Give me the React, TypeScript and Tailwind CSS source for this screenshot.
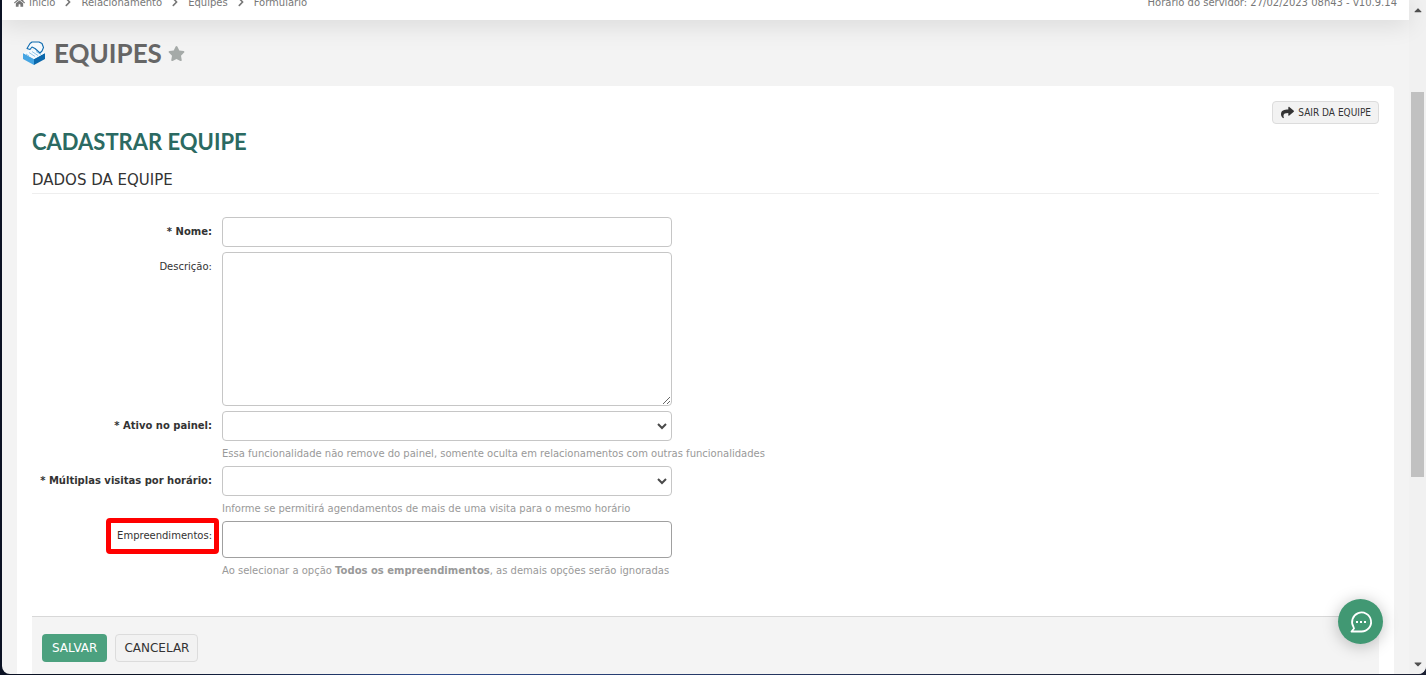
import React from 'react';
import { FaHome, FaChevronRight, FaStar, FaShare, FaCaretUp, FaCaretDown } from 'react-icons/fa';

interface FieldProps {
  id: string;
  label: string;
  required?: boolean;
  highlighted?: boolean;
  hint?: React.ReactNode;
  children: React.ReactNode;
}

const fieldClass = 'block w-full max-w-[450px] rounded border bg-white px-2 outline-none';

const Field: React.FC<FieldProps> = ({ id, label, required = false, highlighted = false, hint, children }) => {
  return (
    <div className="grid grid-cols-[180px_1fr] gap-[10px]">
      <div className="pt-[5px] text-right leading-5">
        <label htmlFor={id} className={`relative inline-block whitespace-nowrap ${required ? 'font-bold' : ''}`}>
          {highlighted && (
            <span className="absolute -top-2 -right-[7px] -bottom-2 -left-[11px] rounded-sm border-5 border-[#ff0000]"></span>
          )}
          {required && <span>* </span>}
          {label}
        </label>
      </div>
      <div>
        {children}
        {hint && <p className="h-[25px] leading-[25px] text-[#999999]">{hint}</p>}
      </div>
    </div>
  );
};

const SelectField: React.FC<{ id: string }> = ({ id }) => (
  <div className="relative max-w-[450px]">
    <select id={id} className={`${fieldClass} h-[30px] appearance-none border-[#c6c6c6]`}></select>
    <svg className="pointer-events-none absolute top-3 right-[5px] h-2 w-[10px]" viewBox="0 0 10 8" fill="none" stroke="#4a4a4a" strokeWidth="2">
      <path d="M1 1 5 5 9 1" />
    </svg>
  </div>
);

const breadcrumb = ['Início', 'Relacionamento', 'Equipes', 'Formulário'];

const Breadcrumb = () => (
  <nav className="flex items-center">
    {breadcrumb.map((item, index) => (
      <React.Fragment key={item}>
        {index > 0 && <FaChevronRight className="mx-2 h-[10px] w-[10px]" />}
        <a href="#" className="flex items-center gap-1">
          {index === 0 && <FaHome className="h-[11px] w-[11px]" />}
          {item}
        </a>
      </React.Fragment>
    ))}
  </nav>
);

const TeamIcon = () => (
  <svg className="h-6 w-6" viewBox="0 0 24 24">
    <path d="M1 12 12 18v6L1 18z" fill="#45a5e3" />
    <path d="M12 18 23 12v6l-11 6z" fill="#0b68ac" />
    <path d="M1 12 6 9.500 18 8l5 4-11 6z" fill="#f4fafe" />
    <path d="M4 13l3 2M7 11.500l6 4M10 10.500l6 4M14 10.500l5 3" stroke="#79b8e2" strokeWidth="0.800" fill="none" />
    <path d="M5 7.500 8 2.500 10 1h7l3 1.500 1.500 4L20 10l-2 2-5-4.500L10 6 8 8.500z" fill="#f6fafd" stroke="#0f6cb0" strokeWidth="1.100" strokeLinejoin="round" />
  </svg>
);

const Scrollbar = () => (
  <div className="flex w-[17px] shrink-0 flex-col items-center bg-[#f1f1f1] text-[#505050]">
    <FaCaretUp className="mt-1 h-3 w-3" />
    <div className="mt-[76px] h-[385px] w-[13px] bg-[#c1c1c1]"></div>
    <FaCaretDown className="mt-auto mb-1 h-3 w-3" />
  </div>
);

const App = () => {
  return (
    <div className="flex h-screen bg-gradient-to-r from-[#0b1224] from-10% via-[#2c4a8c] via-30% to-[#1b2033] to-80% pb-px pl-[2px] font-['DejaVu_Sans',Verdana,sans-serif] text-[10px] text-[#333333]">
      <div className="flex min-w-0 flex-1 overflow-hidden rounded-b-lg bg-[#f3f3f3]">
        <div className="flex min-w-0 flex-1 flex-col">
          <header className="relative h-5 shrink-0 bg-white shadow-[0_4px_24px_rgba(0,0,0,0.12)]">
            <div className="-mt-2 flex h-5 items-center justify-between px-3 text-[#777777]">
              <Breadcrumb />
              <span>Horário do servidor: 27/02/2023 08h43 - v10.9.14</span>
            </div>
          </header>

          <div className="flex h-[66px] shrink-0 items-center pl-5 font-[Lato,sans-serif]">
            <TeamIcon />
            <h1 className="ml-2 text-[26px] font-bold text-[#666666]">EQUIPES</h1>
            <FaStar className="ml-[6px] h-[17px] w-[17px] text-[#a5aaa8]" />
          </div>

          <main className="mx-[15px] flex min-h-0 flex-1 flex-col rounded-t bg-white px-[15px] pt-[15px]">
            <button type="button" className="flex h-[23px] items-center gap-1 self-end rounded border border-[#dcdcdc] bg-[#f2f2f2] pr-[7px] pl-2 font-['DejaVu_Sans_Condensed','DejaVu_Sans',sans-serif]">
              <FaShare className="h-[13px] w-[13px]" />
              SAIR DA EQUIPE
            </button>
            <h2 className="mt-[2px] font-[Lato,sans-serif] text-[22px] leading-8 font-bold text-[#2b6a62]">CADASTRAR EQUIPE</h2>

            <form className="flex min-h-0 flex-1 flex-col">
              <h3 className="h-9 border-b border-[#eeeeee] pt-[10px] text-[15px] leading-[25px]">DADOS DA EQUIPE</h3>
              <div className="mt-[23px] flex flex-col">
                <div className="mb-[5px] flex flex-col gap-[5px]">
                  <Field id="nome" label="Nome:" required>
                    <input id="nome" type="text" className={`${fieldClass} h-[30px] border-[#c6c6c6]`} />
                  </Field>
                  <Field id="descricao" label="Descrição:">
                    <textarea id="descricao" className={`${fieldClass} h-[154px] resize border-[#c6c6c6]`}></textarea>
                  </Field>
                </div>
                <Field id="ativo" label="Ativo no painel:" required hint="Essa funcionalidade não remove do painel, somente oculta em relacionamentos com outras funcionalidades">
                  <SelectField id="ativo" />
                </Field>
                <Field id="visitas" label="Múltiplas visitas por horário:" required hint="Informe se permitirá agendamentos de mais de uma visita para o mesmo horário">
                  <SelectField id="visitas" />
                </Field>
                <Field
                  id="empreendimentos"
                  label="Empreendimentos:"
                  highlighted
                  hint={<>Ao selecionar a opção <strong>Todos os empreendimentos</strong>, as demais opções serão ignoradas</>}
                >
                  <input id="empreendimentos" type="text" className={`${fieldClass} h-[37px] border-[#a0a0a0]`} />
                </Field>
              </div>

              <div className="mt-[33px] flex flex-1 items-start gap-2 border-t border-[#d8d8d8] bg-[#f4f4f4] px-[10px] pt-[17px] text-[12px]">
                <button type="submit" className="h-7 rounded bg-[#4ca17f] px-[10px] text-white">SALVAR</button>
                <button type="button" className="h-7 rounded border border-[#dcdcdc] bg-[#f2f2f2] px-2">CANCELAR</button>
              </div>
            </form>
          </main>
        </div>
        <Scrollbar />
      </div>

      <button type="button" aria-label="Chat" className="fixed right-[43px] bottom-[31px] flex h-[45px] w-[45px] items-center justify-center rounded-full bg-[#419873] shadow-[0_2px_16px_rgba(0,0,0,0.25)]">
        <svg className="h-6 w-6" viewBox="0 0 24 24" fill="none" stroke="#ffffff" strokeWidth="1.800">
          <path d="M2.500 21.500h10a9.500 9.500 0 1 0-8-4.500l.5 1.500z" strokeLinejoin="round" />
          <path d="M7 12h2M11 12h2M15 12h2" strokeWidth="2" />
        </svg>
      </button>
    </div>
  );
};

export default App;
